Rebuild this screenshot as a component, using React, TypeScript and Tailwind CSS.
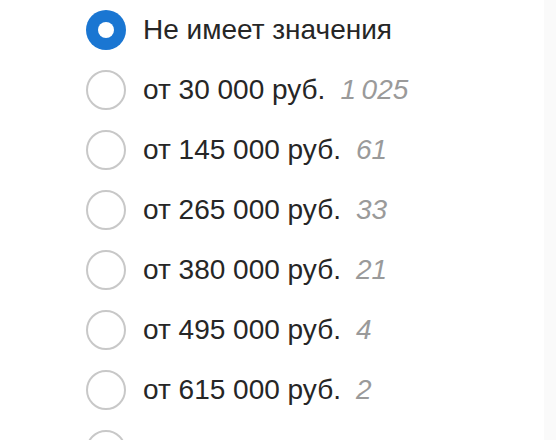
const options = [
  { label: "Не имеет значения", count: "", checked: true },
  { label: "от 30 000 руб.", count: "1\u2009025" },
  { label: "от 145 000 руб.", count: "61" },
  { label: "от 265 000 руб.", count: "33" },
  { label: "от 380 000 руб.", count: "21" },
  { label: "от 495 000 руб.", count: "4" },
  { label: "от 615 000 руб.", count: "2" },
  { label: "Своя зарплата", count: "" },
];

const Radio = ({ checked }: { checked?: boolean }) =>
  checked ? (
    <span className="flex h-10 w-10 shrink-0 items-center justify-center rounded-full bg-[#1a76d2]">
      <span className="h-4 w-4 rounded-full bg-white" />
    </span>
  ) : (
    <span className="h-10 w-10 shrink-0 rounded-full border-2 border-[#c8c8c8] bg-white" />
  );

export default function App() {
  return (
    <div className="relative h-[440px] w-[556px] overflow-hidden bg-white font-['Liberation_Sans',Arial,sans-serif]">
      <div className="absolute right-0 top-0 h-full w-[12px] bg-[#fafafa]" />
      <ul className="flex flex-col pl-[86px]">
        {options.map((o, i) => (
          <li key={i} className="flex h-[60px] items-center gap-[17px]">
            <Radio checked={o.checked} />
            <span className="whitespace-nowrap text-[28px] leading-none text-[#262626]">
              {o.label}
              {o.count && <span className="ml-[15px] italic text-[#9a9a9a]">{o.count}</span>}
            </span>
          </li>
        ))}
      </ul>
    </div>
  );
}
